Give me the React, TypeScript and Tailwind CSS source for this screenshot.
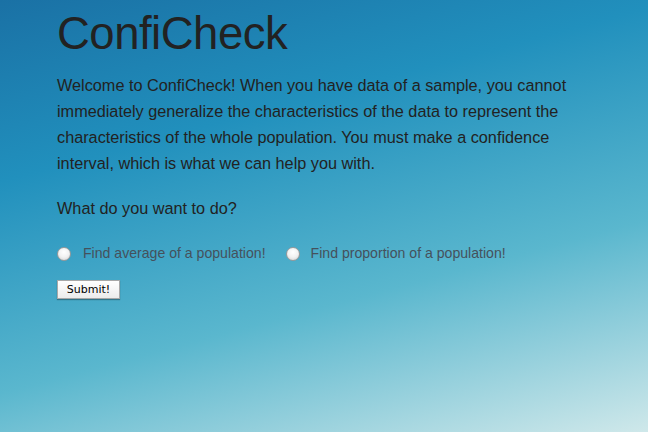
import React from "react";

export default function App() {
  return (
    <div
      className="w-[648px] h-[432px] overflow-hidden bg-[linear-gradient(165deg,#1a71a5_0%,#2190bd_30%,#5ab7ce_65%,#cfe8ea_100%)] text-[#222]"
      style={{ fontFamily: '"Liberation Sans", Arial, sans-serif' }}
    >
      <div className="pl-[57px] pt-[8px]">
        <h1 className="text-[45.5px] leading-[52px] text-[#222] tracking-[-0.5px]">ConfiCheck</h1>
        <p className="mt-[12px] w-[540px] text-[16.25px] leading-[26px] text-[#222]">
          Welcome to ConfiCheck! When you have data of a sample, you cannot immediately generalize the characteristics of the data to represent the characteristics of the whole population. You must make a confidence interval, which is what we can help you with.
        </p>
        <p className="mt-[19px] text-[16.25px] leading-[26px]">What do you want to do?</p>
        <div className="mt-[22px] flex items-center text-[14.1px] text-[#45515c]">
          <label className="flex items-center">
            <span className="w-[14px] h-[14px] rounded-full bg-[radial-gradient(circle_at_50%_35%,#ffffff_0%,#f2f2f2_50%,#cfcfcf_100%)] border border-[#9a9a9a]" />
            <span className="ml-[12px]">Find average of a population!</span>
          </label>
          <label className="flex items-center ml-[20px]">
            <span className="w-[14px] h-[14px] rounded-full bg-[radial-gradient(circle_at_50%_35%,#ffffff_0%,#f2f2f2_50%,#cfcfcf_100%)] border border-[#9a9a9a]" />
            <span className="ml-[11px]">Find proportion of a population!</span>
          </label>
        </div>
        <button
          className="mt-[16px] h-[19px] w-[63px] bg-[linear-gradient(#ffffff,#ececec)] border border-[#a8a8a8] shadow-[0_1px_1px_rgba(0,0,0,0.3)] text-[11px] leading-[17px] text-black"
          style={{ fontFamily: '"DejaVu Sans", sans-serif' }}
        >
          Submit!
        </button>
      </div>
    </div>
  );
}
